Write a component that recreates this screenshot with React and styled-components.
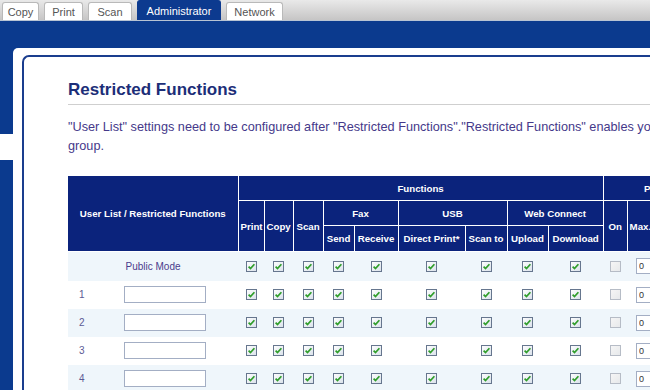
import styled, { createGlobalStyle } from 'styled-components';

const GlobalStyle = createGlobalStyle`
  body {
    margin: 0;
    overflow: hidden;
    background: #ffffff;
    font-family: "Liberation Sans", Arial, sans-serif;
  }
`;

const Page = styled.div`
  width: 650px;
  height: 390px;
  overflow: hidden;
  display: flex;
  flex-direction: column;
`;

const TabBar = styled.div`
  height: 21px;
  display: flex;
  align-items: flex-end;
  gap: 5px;
  padding-left: 2px;
  background: linear-gradient(#e9e9e9, #c6c5c5);
  border-bottom: 1px solid #b8c3d3;
  box-sizing: border-box;
`;

const Tab = styled.div`
  width: ${p => p.$w}px;
  height: ${p => (p.$active ? 20 : 18)}px;
  display: flex;
  align-items: center;
  justify-content: center;
  box-sizing: border-box;
  font-size: 11px;
  color: ${p => (p.$active ? '#ffffff' : '#555555')};
  background: ${p => (p.$active ? '#0c3a8f' : '#ffffff')};
  border: 1px solid ${p => (p.$active ? '#0c3a8f' : '#b9b9b9')};
  border-bottom: none;
  border-radius: 3px 3px 0 0;
`;

const Main = styled.div`
  flex: 1;
  display: flex;
  background: #0b3a8e;
  padding-top: 27px;
  min-height: 0;
`;

const Sidebar = styled.div`
  width: 13px;
  flex-shrink: 0;
  display: flex;
  flex-direction: column;
`;

const SideGap = styled.div`
  margin-top: 86px;
  height: 26px;
  background: #ffffff;
`;

const Panel = styled.div`
  flex: 1;
  background: #ffffff;
  border-top-left-radius: 5px;
  padding: 7px 0 0 9px;
  min-width: 0;
`;

const Frame = styled.div`
  border: 2px solid #1a3d8e;
  border-right: none;
  border-bottom: none;
  border-top-left-radius: 7px;
  height: 100%;
  padding: 22px 0 0 44px;
  box-sizing: border-box;
`;

const Heading = styled.h1`
  margin: 0;
  font-size: 17px;
  line-height: 22px;
  font-weight: bold;
  color: #1c2e78;
  padding-bottom: 3px;
  border-bottom: 1px solid #cfcfcf;
  white-space: nowrap;
`;

const Intro = styled.p`
  margin: 13px 0 0;
  font-size: 12.7px;
  line-height: 19px;
  color: #45398a;
  white-space: nowrap;
`;

const Table = styled.table`
  margin-top: 20px;
  border-collapse: collapse;
  table-layout: fixed;
  width: 671px;
`;

const Head = styled.th`
  background: #0b237c;
  color: #ffffff;
  font-size: 9.7px;
  font-weight: bold;
  border: 1px solid #ffffff;
  border-top: none;
  height: ${p => p.$h || 24}px;
  padding: 0 2px;
  text-align: ${p => p.$align || 'center'};
  white-space: nowrap;
  overflow: hidden;
  &:first-child {
    border-left: none;
  }
`;

const Row = styled.tr`
  height: ${p => p.$h || 28}px;
  background: ${p => (p.$shade ? '#eff6fb' : '#ffffff')};
`;

const Cell = styled.td`
  padding: 0;
  text-align: center;
  vertical-align: middle;
  font-size: 10px;
`;

const NumCell = styled(Cell)`
  text-align: left;
  padding-left: 11px;
  color: #5c5a94;
`;

const NameCell = styled(Cell)`
  text-align: left;
  padding-left: 14px;
`;

const ModeLabel = styled(Cell)`
  color: #4b3c8c;
`;

const NameInput = styled.input`
  display: block;
  width: 82px;
  height: 17px;
  box-sizing: border-box;
  border: 1px solid #a3aec4;
  background: #ffffff;
  margin: 0;
`;

const LimitCell = styled(Cell)`
  text-align: left;
  padding-left: 9px;
`;

const LimitInput = styled.input`
  display: block;
  width: 44px;
  height: 16px;
  box-sizing: border-box;
  border: 1px solid #a3aec4;
  padding: 0 2px;
  font-size: 9px;
  font-family: "Liberation Sans", Arial, sans-serif;
  color: #333;
  margin: 0;
`;

const BoxSvg = styled.svg`
  display: block;
  margin: 0 auto;
`;

const Check = ({ on = true }) => (
  <BoxSvg width="11" height="11" viewBox="0 0 11 11">
    <defs>
      <linearGradient id={on ? 'cbOn' : 'cbOff'} x1="0" y1="0" x2="1" y2="1">
        <stop offset="0" stopColor={on ? '#ffffff' : '#f6f6f6'} />
        <stop offset="1" stopColor={on ? '#d9e1ea' : '#e6e8ea'} />
      </linearGradient>
    </defs>
    <rect
      x="0.5"
      y="0.5"
      width="10"
      height="10"
      fill={`url(#${on ? 'cbOn' : 'cbOff'})`}
      stroke={on ? '#66768e' : '#b6bcc6'}
    />
    {on && (
      <path
        d="M2.6 5.6 L4.5 7.6 L8.4 3.2"
        fill="none"
        stroke="#2f9d2a"
        strokeWidth="1.7"
      />
    )}
  </BoxSvg>
);

const functionCols = 9;

const CheckCells = ({ limit }) => (
  <>
    {Array.from({ length: functionCols }).map((_, i) => (
      <Cell key={i}>
        <Check />
      </Cell>
    ))}
    <Cell>
      <Check on={false} />
    </Cell>
    <LimitCell>
      <LimitInput defaultValue={limit} />
    </LimitCell>
  </>
);

const tabs = [
  { label: 'Copy', w: 37 },
  { label: 'Print', w: 39 },
  { label: 'Scan', w: 44 },
  { label: 'Administrator', w: 84, active: true },
  { label: 'Network', w: 57 },
];

const users = [1, 2, 3, 4];

export default function App() {
  return (
    <Page>
      <GlobalStyle />
      <TabBar>
        {tabs.map(t => (
          <Tab key={t.label} $w={t.w} $active={t.active}>
            {t.label}
          </Tab>
        ))}
      </TabBar>
      <Main>
        <Sidebar>
          <SideGap />
        </Sidebar>
        <Panel>
          <Frame>
            <Heading>Restricted Functions</Heading>
            <Intro>
              "User List" settings need to be configured after "Restricted Functions"."Restricted Functions" enables you to restrict functions for each user or
              <br />
              group.
            </Intro>
            <Table>
              <colgroup>
                <col style={{ width: 42 }} />
                <col style={{ width: 128 }} />
                <col style={{ width: 26 }} />
                <col style={{ width: 29 }} />
                <col style={{ width: 30 }} />
                <col style={{ width: 31 }} />
                <col style={{ width: 44 }} />
                <col style={{ width: 67 }} />
                <col style={{ width: 42 }} />
                <col style={{ width: 41 }} />
                <col style={{ width: 55 }} />
                <col style={{ width: 24 }} />
                <col style={{ width: 112 }} />
              </colgroup>
              <thead>
                <tr>
                  <Head colSpan={2} rowSpan={3}>User List / Restricted Functions</Head>
                  <Head colSpan={9}>Functions</Head>
                  <Head colSpan={2}>Page Limits</Head>
                </tr>
                <tr>
                  <Head rowSpan={2}>Print</Head>
                  <Head rowSpan={2}>Copy</Head>
                  <Head rowSpan={2}>Scan</Head>
                  <Head colSpan={2}>Fax</Head>
                  <Head colSpan={2}>USB</Head>
                  <Head colSpan={2}>Web Connect</Head>
                  <Head rowSpan={2}>On</Head>
                  <Head rowSpan={2} $align="left">Max. Pages</Head>
                </tr>
                <tr>
                  <Head>Send</Head>
                  <Head>Receive</Head>
                  <Head>Direct Print*</Head>
                  <Head>Scan to</Head>
                  <Head>Upload</Head>
                  <Head $h={25}>Download</Head>
                </tr>
              </thead>
              <tbody>
                <Row $shade $h={29}>
                  <ModeLabel colSpan={2}>Public Mode</ModeLabel>
                  <CheckCells limit="0" />
                </Row>
                {users.map(n => (
                  <Row key={n} $shade={n % 2 === 0}>
                    <NumCell>{n}</NumCell>
                    <NameCell>
                      <NameInput />
                    </NameCell>
                    <CheckCells limit="0" />
                  </Row>
                ))}
              </tbody>
            </Table>
          </Frame>
        </Panel>
      </Main>
    </Page>
  );
}
